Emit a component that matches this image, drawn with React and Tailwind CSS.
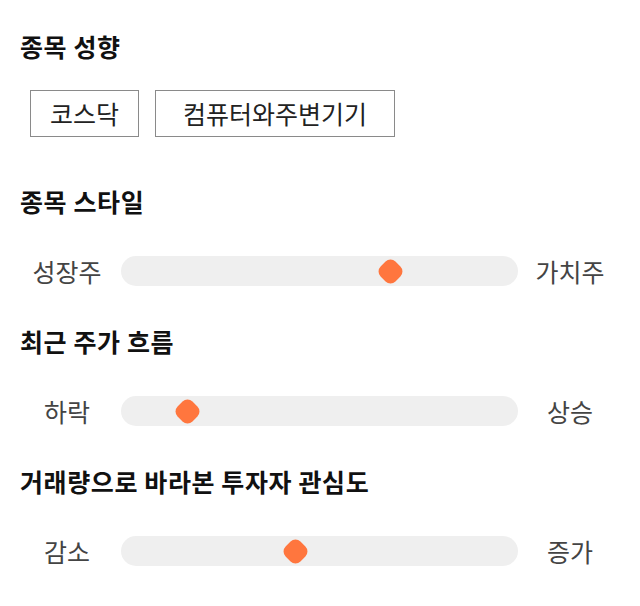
const FONT = { fontFamily: '"Noto Sans CJK KR", "Noto Sans", sans-serif' };

const SLIDERS = [
  { title: "종목 스타일", left: "성장주", right: "가치주", value: 0.693 },
  { title: "최근 주가 흐름", left: "하락", right: "상승", value: 0.141 },
  { title: "거래량으로 바라본 투자자 관심도", left: "감소", right: "증가", value: 0.435 },
];

function Title({ children, className = "" }) {
  return (
    <h2 className={`text-[25px] leading-[32px] font-bold tracking-[0.6px] text-[#111] ${className}`}>
      {children}
    </h2>
  );
}

function Slider({ left, right, value }) {
  return (
    <div className="flex items-center mt-[39px] pl-[2px]">
      <span className="w-[90px] text-center text-[25px] leading-[30px] text-[#444]">{left}</span>
      <div className="relative ml-[9px] w-[397px] h-[30px] rounded-full bg-[#efefef]">
        {/* thumb: rounded diamond, ~29px across */}
        <div
          className="absolute top-0 w-[29px] h-[30px] flex items-center justify-center"
          style={{ left: `${value * (397 - 29)}px` }}
        >
          <div className="w-[21px] h-[21px] rotate-45 rounded-[7px] bg-[#ff763e]" />
        </div>
      </div>
      <span className="ml-[7px] w-[90px] text-center text-[25px] leading-[30px] text-[#444]">{right}</span>
    </div>
  );
}

export default function App() {
  return (
    <div className="w-[640px] h-[606px] bg-white px-5 pt-[30px]" style={FONT}>
      {/* ── 종목 성향 ── */}
      <Title>종목 성향</Title>
      <div className="flex gap-4 mt-[28px] ml-[10px]">
        <span className="w-[109px] h-[47px] flex items-center justify-center border border-[#8a8a8a] text-[25px] text-[#222]">
          코스닥
        </span>
        <span className="w-[240px] h-[47px] flex items-center justify-center border border-[#8a8a8a] text-[25px] text-[#222]">
          컴퓨터와주변기기
        </span>
      </div>

      {/* ── Sliders ── */}
      {SLIDERS.map((s, i) => (
        <div key={s.title}>
          <Title className={i === 0 ? "mt-[48px]" : "mt-[39px]"}>{s.title}</Title>
          <Slider left={s.left} right={s.right} value={s.value} />
        </div>
      ))}
    </div>
  );
}
